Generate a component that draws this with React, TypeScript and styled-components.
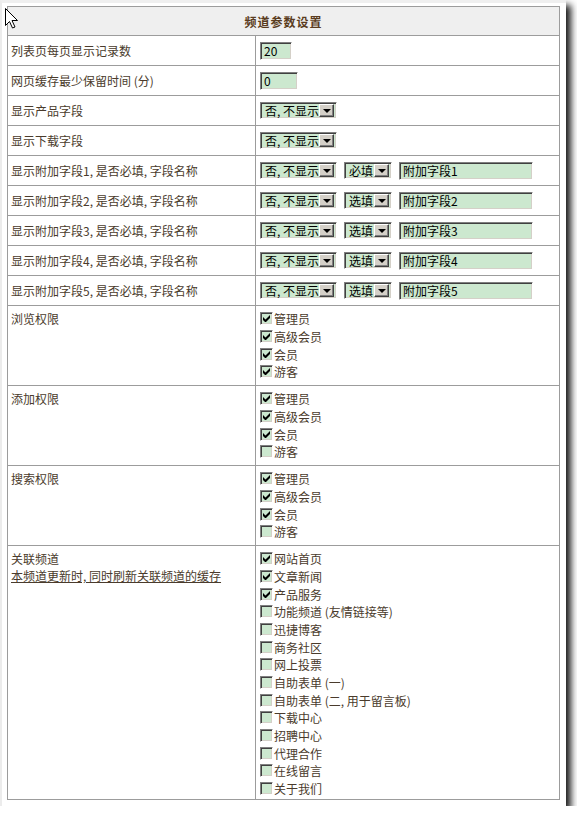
import React from "react";
import styled, { createGlobalStyle } from "styled-components";

const GlobalStyle = createGlobalStyle`
  html, body {
    margin: 0;
    padding: 0;
    background: #fff;
  }
  body {
    font-family: "Noto Sans CJK SC", "Noto Sans", sans-serif;
    font-size: 12px;
    color: #4a3b2c;
  }
`;

const Window = styled.div`
  position: relative;
  box-sizing: border-box;
  width: 566px;
  height: 806px;
  padding: 3px 6px 6px 5px;
  background: #fff;
  border-top: 3px solid #efefef;
  border-left: 2px solid #ececec;
  box-shadow: 5px 5px 7px 0 rgba(0, 0, 0, 0.9);
`;

const Sheet = styled.div`
  display: grid;
  grid-template-columns: 248px 304px;
  border-top: 1px solid #9c9c9c;
  border-left: 1px solid #9c9c9c;
`;

const Cell = styled.div`
  box-sizing: content-box;
  border-right: 1px solid #9c9c9c;
  border-bottom: 1px solid #9c9c9c;
`;

const HeadCell = styled(Cell)`
  grid-column: 1 / -1;
  height: 28px;
  display: flex;
  align-items: center;
  justify-content: center;
  background: #efefef;
  font-weight: bold;
  letter-spacing: 1px;
  color: #5a3c20;
`;

const LabelCell = styled(Cell)<{ $top?: boolean }>`
  display: flex;
  flex-direction: column;
  justify-content: ${(p) => (p.$top ? "flex-start" : "center")};
  padding: ${(p) => (p.$top ? "4px 0 0 3px" : "0 0 0 3px")};
  line-height: 17px;
  white-space: nowrap;
`;

const Note = styled.span`
  text-decoration: underline;
`;

const ValueCell = styled(Cell)<{ $min?: number }>`
  display: flex;
  align-items: center;
  gap: 7px;
  min-height: ${(p) => p.$min ?? 29}px;
  padding-left: 4px;
`;

const inset = `
  box-sizing: border-box;
  border: 1px solid;
  border-color: #808080 #fff #fff #808080;
  box-shadow: inset 1px 1px #404040, inset -1px -1px #d4d0c8;
  background: #cce8cf;
`;

const TextBox = styled.input<{ $w: number }>`
  ${inset}
  width: ${(p) => p.$w}px;
  height: 18px;
  margin: 0;
  padding: 0 3px;
  font: 12px "Noto Sans CJK SC", "Noto Sans", sans-serif;
  color: #000;
  outline: none;
`;

const Combo = styled.div<{ $w: number }>`
  ${inset}
  display: inline-flex;
  align-items: center;
  justify-content: space-between;
  width: ${(p) => p.$w}px;
  height: 17px;
  padding: 2px 2px 2px 4px;
  color: #000;
  line-height: 13px;
  white-space: nowrap;
  overflow: hidden;
`;

const ComboButton = styled.span`
  box-sizing: border-box;
  flex: none;
  width: 15px;
  height: 13px;
  display: flex;
  align-items: center;
  justify-content: center;
  background: #d4d0c8;
  border: 1px solid;
  border-color: #fff #404040 #404040 #fff;
  box-shadow: inset -1px -1px #808080;

  &::after {
    content: "";
    border-left: 4px solid transparent;
    border-right: 4px solid transparent;
    border-top: 4px solid #000;
    margin-top: 1px;
  }
`;

const Checklist = styled.div`
  display: flex;
  flex-direction: column;
  align-self: flex-start;
  padding: 4px 0 2px;
`;

const CheckItem = styled.label`
  display: flex;
  align-items: center;
  height: 17.67px;
  white-space: nowrap;
`;

const Box = styled.span`
  ${inset}
  width: 13px;
  height: 13px;
  margin-right: 1px;
  display: flex;
  align-items: center;
  justify-content: center;
`;

const Cursor = styled.svg`
  position: absolute;
  left: 3px;
  top: 5px;
`;

type Field = { label: string; kind: "input" | "select"; value?: string; w?: number };

const basicFields: Field[] = [
  { label: "列表页每页显示记录数", kind: "input", value: "20", w: 32 },
  { label: "网页缓存最少保留时间 (分)", kind: "input", value: "0", w: 38 },
  { label: "显示产品字段", kind: "select" },
  { label: "显示下载字段", kind: "select" },
];

const extraFields = [1, 2, 3, 4, 5].map((n) => ({
  n,
  must: n === 1 ? "必填" : "选填",
}));

const roles = ["管理员", "高级会员", "会员", "游客"];

const permissions = [
  { label: "浏览权限", checked: [true, true, true, true] },
  { label: "添加权限", checked: [true, true, true, false] },
  { label: "搜索权限", checked: [true, true, true, false] },
];

const channels = [
  { name: "网站首页", on: true },
  { name: "文章新闻", on: true },
  { name: "产品服务", on: true },
  { name: "功能频道 (友情链接等)", on: false },
  { name: "迅捷博客", on: false },
  { name: "商务社区", on: false },
  { name: "网上投票", on: false },
  { name: "自助表单 (一)", on: false },
  { name: "自助表单 (二, 用于留言板)", on: false },
  { name: "下载中心", on: false },
  { name: "招聘中心", on: false },
  { name: "代理合作", on: false },
  { name: "在线留言", on: false },
  { name: "关于我们", on: false },
];

function Select({ text, w }: { text: string; w: number }) {
  return (
    <Combo $w={w}>
      <span>{text}</span>
      <ComboButton />
    </Combo>
  );
}

function Check({ on, children }: { on: boolean; children: React.ReactNode }) {
  return (
    <CheckItem>
      <Box>
        {on && (
          <svg width="7" height="7" viewBox="0 0 7 7">
            <path d="M0 2v3l2 2h1l4-4V0L2.5 4.5z" fill="#000" />
          </svg>
        )}
      </Box>
      {children}
    </CheckItem>
  );
}

export default function App() {
  return (
    <>
      <GlobalStyle />
      <Window>
        <Sheet>
          <HeadCell>频道参数设置</HeadCell>

          {basicFields.map((f) => (
            <React.Fragment key={f.label}>
              <LabelCell>{f.label}</LabelCell>
              <ValueCell>
                {f.kind === "input" ? (
                  <TextBox $w={f.w!} defaultValue={f.value} />
                ) : (
                  <Select text="否, 不显示" w={77} />
                )}
              </ValueCell>
            </React.Fragment>
          ))}

          {extraFields.map((f) => (
            <React.Fragment key={f.n}>
              <LabelCell>显示附加字段{f.n}, 是否必填, 字段名称</LabelCell>
              <ValueCell>
                <Select text="否, 不显示" w={77} />
                <Select text={f.must} w={48} />
                <TextBox $w={134} defaultValue={`附加字段${f.n}`} />
              </ValueCell>
            </React.Fragment>
          ))}

          {permissions.map((p) => (
            <React.Fragment key={p.label}>
              <LabelCell $top>{p.label}</LabelCell>
              <ValueCell $min={79}>
                <Checklist>
                  {roles.map((r, i) => (
                    <Check key={r} on={p.checked[i]}>
                      {r}
                    </Check>
                  ))}
                </Checklist>
              </ValueCell>
            </React.Fragment>
          ))}

          <LabelCell $top>
            <span>关联频道</span>
            <Note>本频道更新时, 同时刷新关联频道的缓存</Note>
          </LabelCell>
          <ValueCell>
            <Checklist>
              {channels.map((c) => (
                <Check key={c.name} on={c.on}>
                  {c.name}
                </Check>
              ))}
            </Checklist>
          </ValueCell>
        </Sheet>

        <Cursor width="13" height="21" viewBox="0 0 13 21">
          <path
            d="M0.5 0.5v17l4-4 3 6.5 2.5-1-3-6.5h5.5z"
            fill="#fff"
            stroke="#000"
            strokeWidth="1"
            strokeLinejoin="miter"
          />
        </Cursor>
      </Window>
    </>
  );
}
